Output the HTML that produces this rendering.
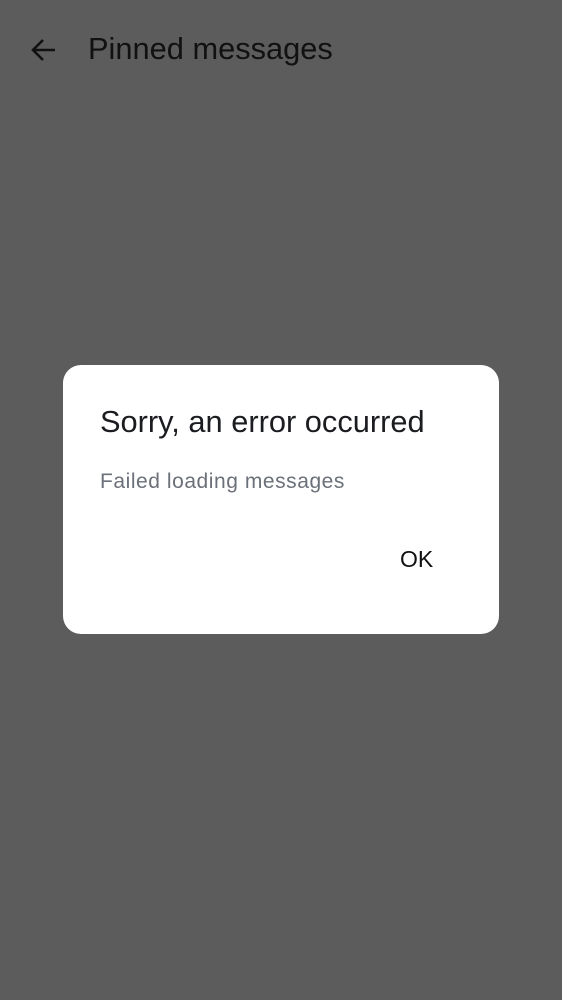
<!DOCTYPE html>
<html><head><style>
html,body{margin:0;padding:0}
body{width:562px;height:1000px;background:#5c5c5c;position:relative;overflow:hidden;font-family:"Liberation Sans",sans-serif}
.t{position:absolute;left:88px;top:31px;font-size:30.8px;color:#111;white-space:nowrap}
.d{position:absolute;left:63px;top:365px;width:436px;height:269px;background:#fff;border-radius:18px}
.h{position:absolute;left:37px;top:39px;font-size:30.8px;color:#1a1c20;white-space:nowrap}
.s{position:absolute;left:37px;top:105px;font-size:21px;color:#6b7079;white-space:nowrap;letter-spacing:0.55px}
.ok{position:absolute;left:337px;top:181px;font-size:23px;color:#111}
</style></head><body>
<svg style="position:absolute;left:29px;top:37px" width="28" height="26" viewBox="0 0 28 26"><path d="M26 13H4M14 3L4 13l10 10" fill="none" stroke="#111" stroke-width="2.6"/></svg>
<div class="t">Pinned messages</div>
<div class="d">
<div class="h">Sorry, an error occurred</div>
<div class="s">Failed loading messages</div>
<div class="ok">OK</div>
</div>
</body></html>
